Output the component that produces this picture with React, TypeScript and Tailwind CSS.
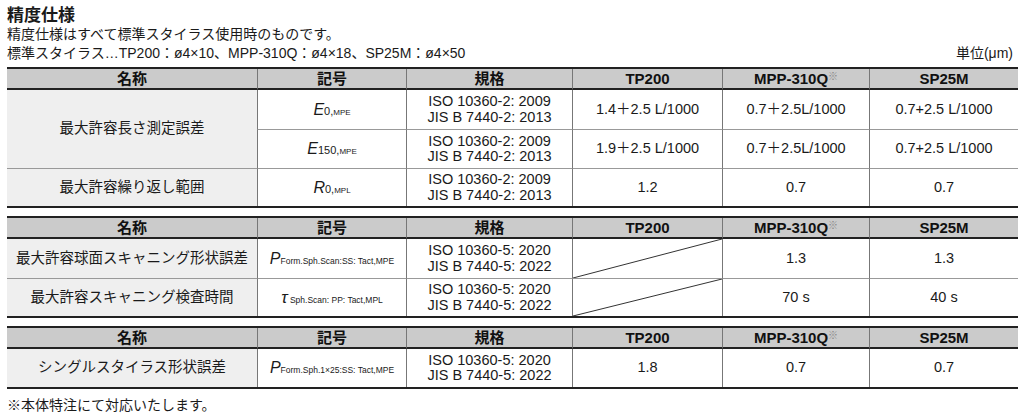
import React from "react";

const GRID = "grid grid-cols-[250px_149px_166px_150px_147px_149px]";

function Header() {
  const heads: React.ReactNode[] = [
    "名称",
    "記号",
    "規格",
    "TP200",
    <span key="m">
      MPP-310Q<span className="text-[10px] font-normal text-[#888] align-[4px]">※</span>
    </span>,
    "SP25M",
  ];
  return (
    <>
      {heads.map((h, i) => (
        <div
          key={i}
          className={
            "h-[21px] bg-[#cbcbcb] border-b-2 border-[#222] flex items-center justify-center font-bold text-[15px] leading-none text-[#111] " +
            (i > 0 ? "border-l border-l-[#777]" : "")
          }
        >
          {h}
        </div>
      ))}
    </>
  );
}

function Std({ a, b }: { a: string; b: string }) {
  return (
    <div className="flex flex-col items-center leading-[15.5px] text-[14.5px]">
      <span>{a}</span>
      <span>{b}</span>
    </div>
  );
}

function Diag() {
  return (
    <svg className="absolute inset-0 w-full h-full" viewBox="0 0 100 100" preserveAspectRatio="none">
      <line x1="0" y1="100" x2="100" y2="0" stroke="#333" strokeWidth="1" vectorEffect="non-scaling-stroke" />
    </svg>
  );
}

const cell = "flex items-center justify-center text-center text-[14.5px] border-l border-l-[#777]";

export default function App() {
  return (
    <div className="w-[1024px] h-[413px] bg-white px-[7px] pt-[3px] text-[#1a1a1a] font-[Liberation_Sans,Noto_Sans_CJK_JP,sans-serif] overflow-hidden">
      <div className="text-[17px] font-bold leading-[21px] font-[Noto_Sans_CJK_JP,sans-serif]">精度仕様</div>
      <div className="text-[14px] leading-[19px] mt-[1px]">精度仕様はすべて標準スタイラス使用時のものです。</div>
      <div className="flex justify-between text-[14px] leading-[19px] w-[1011px]">
        <span>標準スタイラス…TP200：ø4×10、MPP-310Q：ø4×18、SP25M：ø4×50</span>
        <span className="pr-[5px]">単位(μm)</span>
      </div>

      {/* Table 1 */}
      <div className={GRID + " w-[1011px] mt-[4px] border-t-2 border-b-2 border-[#222]"}>
        <Header />
        <div className="row-span-2 bg-[#efefef] flex items-center justify-center text-[14.5px]">最大許容長さ測定誤差</div>
        <div className={cell + " h-[39px]"}>
          <span>
            <i className="text-[16px]">E</i>
            <span className="text-[11px]">0,</span>
            <span className="text-[8px]">MPE</span>
          </span>
        </div>
        <div className={cell}><Std a="ISO 10360-2: 2009" b="JIS B 7440-2: 2013" /></div>
        <div className={cell}>1.4＋2.5 L/1000</div>
        <div className={cell}>0.7＋2.5L/1000</div>
        <div className={cell}>0.7+2.5 L/1000</div>

        <div className={cell + " h-[39px] border-t border-t-[#999]"}>
          <span>
            <i className="text-[16px]">E</i>
            <span className="text-[11px]">150,</span>
            <span className="text-[8px]">MPE</span>
          </span>
        </div>
        <div className={cell + " border-t border-t-[#999]"}><Std a="ISO 10360-2: 2009" b="JIS B 7440-2: 2013" /></div>
        <div className={cell + " border-t border-t-[#999]"}>1.9＋2.5 L/1000</div>
        <div className={cell + " border-t border-t-[#999]"}>0.7＋2.5L/1000</div>
        <div className={cell + " border-t border-t-[#999]"}>0.7+2.5 L/1000</div>

        <div className="h-[38px] bg-[#efefef] flex items-center justify-center text-[14.5px] border-t border-t-[#999]">最大許容繰り返し範囲</div>
        <div className={cell + " border-t border-t-[#999]"}>
          <span>
            <i className="text-[16px]">R</i>
            <span className="text-[11px]">0,</span>
            <span className="text-[8px]">MPL</span>
          </span>
        </div>
        <div className={cell + " border-t border-t-[#999]"}><Std a="ISO 10360-2: 2009" b="JIS B 7440-2: 2013" /></div>
        <div className={cell + " border-t border-t-[#999]"}>1.2</div>
        <div className={cell + " border-t border-t-[#999]"}>0.7</div>
        <div className={cell + " border-t border-t-[#999]"}>0.7</div>
      </div>

      {/* Table 2 */}
      <div className={GRID + " w-[1011px] mt-[8px] border-t-2 border-b-2 border-[#222]"}>
        <Header />
        <div className="h-[39px] bg-[#efefef] flex items-center justify-center text-[14.5px]">最大許容球面スキャニング形状誤差</div>
        <div className={cell}>
          <span>
            <i className="text-[16px]">P</i>
            <span className="text-[8.5px]">Form.Sph.Scan:SS: Tact,MPE</span>
          </span>
        </div>
        <div className={cell}><Std a="ISO 10360-5: 2020" b="JIS B 7440-5: 2022" /></div>
        <div className={cell + " relative"}><Diag /></div>
        <div className={cell}>1.3</div>
        <div className={cell}>1.3</div>

        <div className="h-[38px] bg-[#efefef] flex items-center justify-center text-[14.5px] border-t border-t-[#999]">最大許容スキャニング検査時間</div>
        <div className={cell + " border-t border-t-[#999]"}>
          <span>
            <i className="text-[17px]">τ</i>
            <span className="text-[8.5px]"> Sph.Scan: PP: Tact,MPL</span>
          </span>
        </div>
        <div className={cell + " border-t border-t-[#999]"}><Std a="ISO 10360-5: 2020" b="JIS B 7440-5: 2022" /></div>
        <div className={cell + " border-t border-t-[#999] relative"}><Diag /></div>
        <div className={cell + " border-t border-t-[#999]"}>70 s</div>
        <div className={cell + " border-t border-t-[#999]"}>40 s</div>
      </div>

      {/* Table 3 */}
      <div className={GRID + " w-[1011px] mt-[8px] border-t-2 border-b-2 border-[#222]"}>
        <Header />
        <div className="h-[38px] bg-[#efefef] flex items-center justify-center text-[14.5px]">シングルスタイラス形状誤差</div>
        <div className={cell}>
          <span>
            <i className="text-[16px]">P</i>
            <span className="text-[8.5px]">Form.Sph.1×25:SS: Tact,MPE</span>
          </span>
        </div>
        <div className={cell}><Std a="ISO 10360-5: 2020" b="JIS B 7440-5: 2022" /></div>
        <div className={cell}>1.8</div>
        <div className={cell}>0.7</div>
        <div className={cell}>0.7</div>
      </div>

      <div className="text-[14px] leading-[18px] mt-[7px]">※本体特注にて対応いたします。</div>
    </div>
  );
}
